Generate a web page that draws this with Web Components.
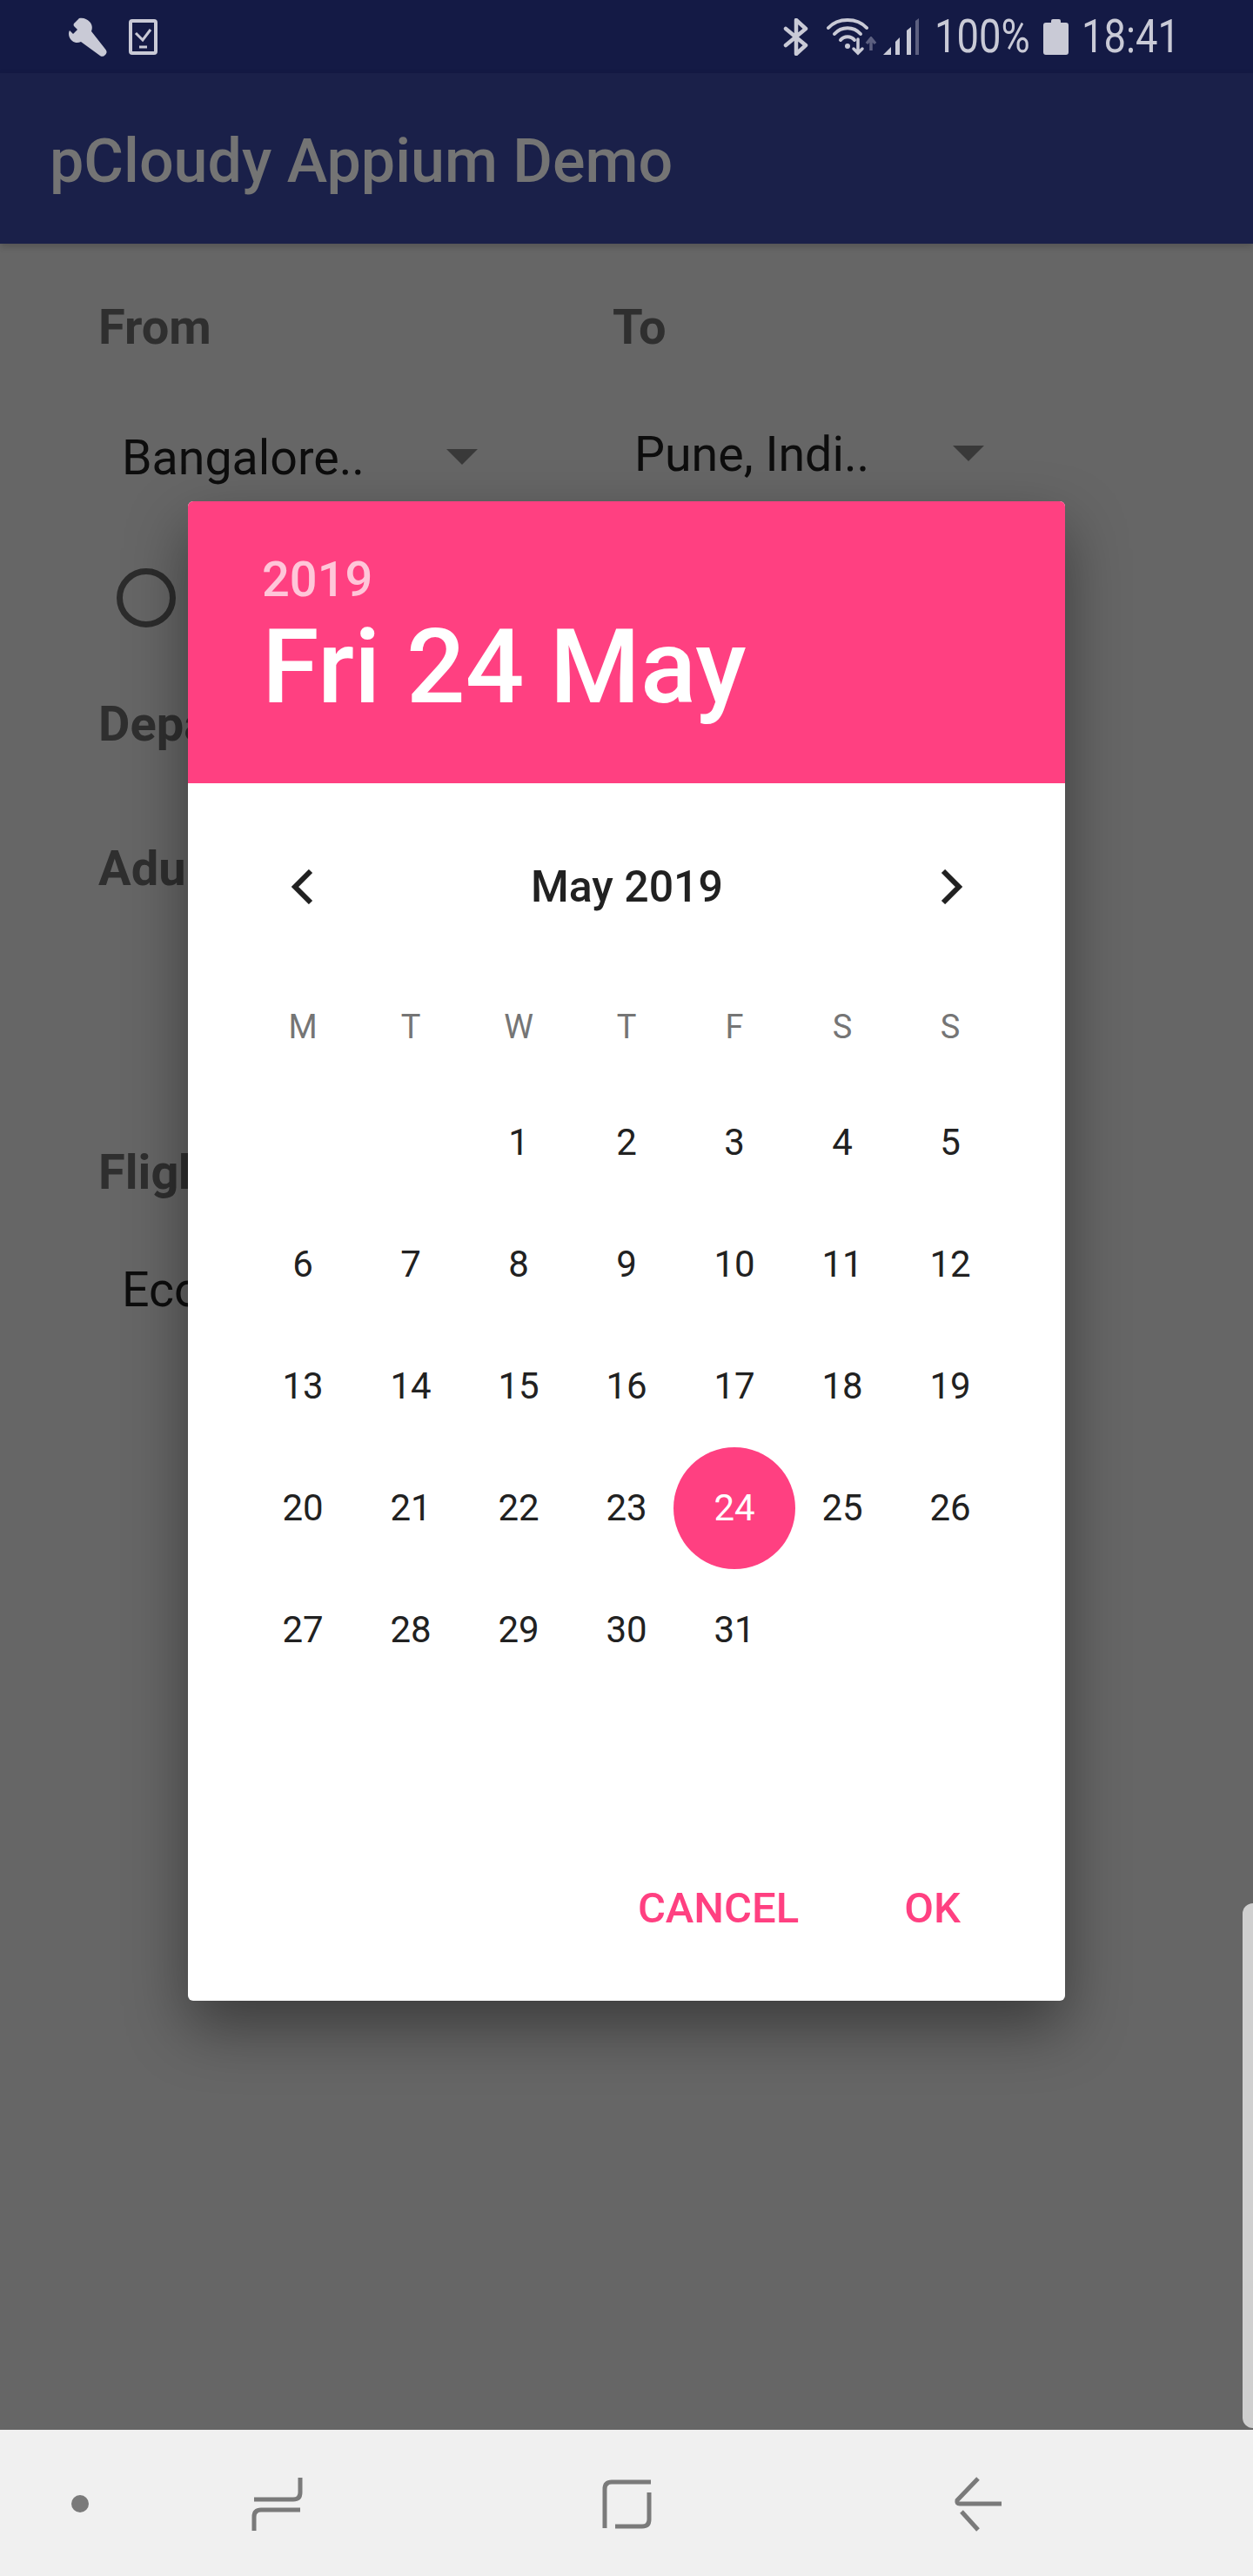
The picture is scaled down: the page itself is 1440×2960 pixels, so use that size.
<!DOCTYPE html>
<html>
<head>
<meta charset="utf-8">
<title>pCloudy Appium Demo</title>
<style>
  html, body { margin: 0; padding: 0; }
  body { width: 1440px; height: 2960px; overflow: hidden; font-family: Roboto, "Liberation Sans", sans-serif; }
</style>
</head>
<body>
<phone-screen>
  <status-bar slot="status"></status-bar>
  <app-bar slot="app">pCloudy Appium Demo</app-bar>
  <flight-form slot="form"></flight-form>
  <edge-handle slot="overlay"></edge-handle>
  <date-dialog slot="overlay"></date-dialog>
  <nav-bar slot="nav"></nav-bar>
</phone-screen>

<script>
function define(name, html) {
  const tpl = document.createElement('template');
  tpl.innerHTML = html;
  customElements.define(name, class extends HTMLElement {
    constructor() {
      super();
      this.attachShadow({ mode: 'open' }).appendChild(tpl.content.cloneNode(true));
    }
  });
}

define('phone-screen', `
  <style>
    :host { display: flex; flex-direction: column; position: relative; width: 1440px; height: 2960px; background: #fff; overflow: hidden; }
    .main { flex: 1; display: flex; flex-direction: column; position: relative; min-height: 0; }
    .scrim { position: absolute; inset: 0; background: rgba(0,0,0,.6); }
  </style>
  <slot name="status"></slot>
  <div class="main">
    <slot name="app"></slot>
    <slot name="form"></slot>
    <div class="scrim"></div>
    <slot name="overlay"></slot>
  </div>
  <slot name="nav"></slot>
`);

define('status-bar', `
  <style>
    :host { display: block; height: 84px; background: #141a45; color: #c9cad6; position: relative; }
    .row { display: flex; align-items: flex-start; height: 84px; }
    svg { display: block; flex: none; }
    .txt { font: 400 54px/54px Roboto, sans-serif; transform-origin: 0 0; transform: scaleX(.84); white-space: nowrap; width: 0; margin-top: 15px; }
  </style>
  <div class="row">
    <svg style="margin:20px 0 0 78px" width="46" height="45" viewBox="0 0 46 45">
      <path d="M13 1 L7 7 a3 3 0 0 0 0 3 l4 4 -5 5 -4-4 C0 18 1 24 5 27 c3 2.500 7 2.500 10 1 L37 44 c2 1.500 4 1 6-1 2-2 2-4 .5-6 L27 16 c1.500-4 1-8-2-11 C22 2 18 0 13 1z" fill="currentColor"/>
    </svg>
    <svg style="margin:22px 0 0 24px" width="33" height="41" viewBox="0 0 33 41" fill="none" stroke="currentColor">
      <rect x="2" y="2" width="29" height="37" rx="2" stroke-width="4"/>
      <path d="M8 16 L16 24 L25 12" stroke-width="3"/>
      <path d="M12 32 H21" stroke-width="3"/>
    </svg>
    <svg style="margin:21px 0 0 719px" width="29" height="43" viewBox="0 0 29 43" fill="none" stroke="currentColor" stroke-width="4.500" stroke-linejoin="round" stroke-linecap="round">
      <path d="M3 12 L26 31 L15 41 V2 L26 12 L3 31"/>
    </svg>
    <svg style="margin:20px 0 0 21px" width="50" height="44" viewBox="0 0 50 44" fill="none" stroke="currentColor" stroke-width="4" stroke-linecap="round">
      <path d="M2 12 C13 0 35 0 46 12"/>
      <path d="M9 19 C17 10 31 10 39 19"/>
      <path d="M16 26 C20 21 28 21 32 26"/>
      <circle cx="24" cy="33" r="3" fill="currentColor" stroke="none"/>
      <path d="M36 25 V40 M31 36 L36 41 L41 36" stroke-width="3.500"/>
    </svg>
    <svg style="margin:42px 0 0 -6px" width="14" height="16" viewBox="0 0 14 16" fill="none" stroke="#5d6080" stroke-width="3.500">
      <path d="M7 16 V3 M2 8 L7 2 L12 8"/>
    </svg>
    <svg style="margin:21px 0 0 7px" width="42" height="42" viewBox="0 0 42 42" fill="currentColor">
      <path d="M0 42 L9 33 V42z"/>
      <path d="M14 27 L19 22 V42 H14z"/>
      <path d="M27 14 L32 10 V42 H27z"/>
      <path d="M37 3 L41 0 V42 H37z" fill="#5d6080"/>
    </svg>
    <span class="txt" style="margin-left:17px">100%</span>
    <svg style="margin:21px 0 0 125px" width="29" height="42" viewBox="0 0 29 42" fill="currentColor">
      <path d="M9 3 Q9 1 11 1 H18 Q20 1 20 3 V5 H26 Q29 5 29 8 V39 Q29 42 26 42 H3 Q0 42 0 39 V8 Q0 5 3 5 H9z"/>
    </svg>
    <span class="txt" style="margin-left:15px">18:41</span>
  </div>
`);

define('app-bar', `
  <style>
    :host { display: flex; align-items: center; flex: none; height: 196px; box-sizing: border-box; padding: 6px 0 0 57px; background: #1a2049; color: #747474; font: 500 70px/1 Roboto, sans-serif; box-shadow: 0 3px 8px rgba(0,0,0,.2); position: relative; z-index: 1; }
  </style>
  <slot></slot>
`);

define('form-label', `
  <style>
    :host { display: block; height: 68px; font: 700 56px/68px Roboto, sans-serif; color: #777; white-space: nowrap; }
  </style>
  <slot></slot>
`);

define('form-spinner', `
  <style>
    :host { display: flex; align-items: center; height: 68px; width: 409px; font: 400 55.500px/68px Roboto, sans-serif; color: #212121; position: relative; white-space: nowrap; }
    i { position: absolute; right: 0; top: 23px; width: 0; height: 0; border: 18px solid transparent; border-top-color: #8f8f8f; border-bottom: 0; }
  </style>
  <slot></slot><i></i>
`);

define('flight-form', `
  <style>
    :host { display: block; flex: 1; padding: 62px 0 0 113px; }
    .cols { display: grid; grid-template-columns: 591px 1fr; }
    .spin { margin: 83px 0 0 27px; }
    .spin2 { margin: 79px 0 0 25px; width: 402px; }
    .radio { box-sizing: border-box; width: 68px; height: 68px; margin: 92px 0 0 21px; border: 7px solid #6e6e6e; border-radius: 50%; }
    .gap { margin-top: 77px; }
    .gap2 { margin-top: 98px; }
    .gap3 { margin-top: 281px; }
    .eco { margin: 68px 0 0 27px; }
  </style>
  <div class="cols">
    <form-label>From</form-label>
    <form-label>To</form-label>
    <form-spinner class="spin">Bangalore..</form-spinner>
    <form-spinner class="spin2">Pune, Indi..</form-spinner>
  </div>
  <div class="radio"></div>
  <form-label class="gap">Depa</form-label>
  <form-label class="gap2">Adu</form-label>
  <form-label class="gap3">Fligh</form-label>
  <form-spinner class="eco">Eco</form-spinner>
`);

define('day-cell', `
  <style>
    :host { display: flex; align-items: center; justify-content: center; height: 140px; font: 400 42px/1 Roboto, sans-serif; color: #212121; }
    :host([selected]) { color: #fff; }
    span { display: flex; align-items: center; justify-content: center; width: 140px; height: 140px; flex: none; border-radius: 50%; }
    :host([selected]) span { background: #ff4081; }
  </style>
  <span><slot></slot></span>
`);

define('date-dialog', `
  <style>
    :host { display: block; position: absolute; left: 216px; top: 492px; width: 1008px; height: 1723px; background: #fff; border-radius: 6px; box-shadow: 0 30px 70px rgba(0,0,0,.42); overflow: hidden; }
    .head { height: 324px; box-sizing: border-box; background: #ff4081; color: #fff; padding: 62px 0 0 85px; }
    .year { font: 500 56px/1 Roboto, sans-serif; color: rgba(255,255,255,.7); }
    .date { font: 500 119px/1 Roboto, sans-serif; margin-top: 13px; }
    .month { display: flex; align-items: center; justify-content: space-between; height: 238px; padding: 0 117px 0 118px; box-sizing: border-box; font: 500 50px/1 Roboto, sans-serif; color: #212121; }
    .grid { display: grid; grid-template-columns: repeat(7, 124px); margin-left: 70px; }
    .dow { display: flex; align-items: center; justify-content: center; height: 92px; margin-top: -4px; font: 400 38px/1 Roboto, sans-serif; color: #757575; }
    .grid2 { margin-top: 17px; }
    .actions { display: flex; justify-content: flex-end; gap: 121px; padding: 0 120px 0 0; margin-top: 225px; font: 500 49px/1 Roboto, sans-serif; color: #ff4081; }
  </style>
  <div class="head">
    <div class="year">2019</div>
    <div class="date">Fri 24 May</div>
  </div>
  <div class="month">
    <svg width="26" height="40" viewBox="0 0 26 40" fill="none" stroke="#212121" stroke-width="6"><path d="M23 2 L5 20 L23 38"/></svg>
    <span>May 2019</span>
    <svg width="26" height="40" viewBox="0 0 26 40" fill="none" stroke="#212121" stroke-width="6"><path d="M3 2 L21 20 L3 38"/></svg>
  </div>
  <div class="grid" id="dow"></div>
  <div class="grid grid2" id="days"></div>
  <div class="actions"><span>CANCEL</span><span>OK</span></div>
`);

define('edge-handle', `
  <style>
    :host { display: block; position: absolute; right: 0; top: 2103px; width: 12px; height: 603px; background: #cfcfcf; border-radius: 12px 0 0 12px; }
  </style>
`);

define('nav-bar', `
  <style>
    :host { display: block; flex: none; height: 168px; background: #f0f0f0; }
    svg { display: block; }
  </style>
  <svg width="1440" height="168" viewBox="0 2792 1440 168" fill="none" stroke="#7a7a7a" stroke-width="5">
    <circle cx="92" cy="2877" r="10" fill="#7a7a7a" stroke="none"/>
    <path d="M345 2847 V2864 Q345 2872 337 2872 H292"/>
    <path d="M345 2884 H300 Q292 2884 292 2892 V2908"/>
    <path d="M748 2852 H703 Q695 2852 695 2860 V2905"/>
    <path d="M707 2903 H738 Q746 2903 746 2895 V2864"/>
    <path d="M1124 2848 L1100 2873 Q1099 2877 1103 2877 H1151"/>
    <path d="M1105 2886 L1124 2907"/>
  </svg>
`);

// fill the calendar
const root = document.querySelector('date-dialog').shadowRoot;
['M','T','W','T','F','S','S'].forEach((d) => {
  const el = document.createElement('div');
  el.className = 'dow';
  el.textContent = d;
  root.getElementById('dow').appendChild(el);
});
const days = root.getElementById('days');
for (let i = 0; i < 2; i++) days.appendChild(document.createElement('div'));
for (let d = 1; d <= 31; d++) {
  const el = document.createElement('day-cell');
  el.textContent = d;
  if (d === 24) el.setAttribute('selected', '');
  days.appendChild(el);
}
</script>
</body>
</html>
